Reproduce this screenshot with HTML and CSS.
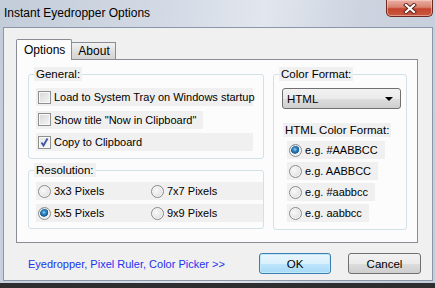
FILE: index.html
```html
<!DOCTYPE html>
<html lang="en">
<head>
    <meta charset="UTF-8">
    <title>Instant Eyedropper Options</title>
    <link rel="stylesheet" href="styles.css">
</head>
<body>
    <div class="window">
        <div class="titlebar">
            <span class="title">Instant Eyedropper Options</span>
            <span class="close">
                <svg width="14" height="11" viewBox="0 0 14 11">
                    <path d="M3 2 L11 9 M11 2 L3 9" stroke="#5a2018" stroke-width="4" stroke-linecap="square"/>
                    <path d="M3 2 L11 9 M11 2 L3 9" stroke="#ffffff" stroke-width="2.2" stroke-linecap="square"/>
                </svg>
            </span>
        </div>

        <div class="client">
            <div class="tabs">
                <div class="tab active">Options</div>
                <div class="tab">About</div>
            </div>

            <div class="panel">
                <div class="left">
                    <fieldset class="group general">
                        <legend>General:</legend>
                        <div class="row wide"><span class="check"></span>Load to System Tray on Windows startup</div>
                        <div class="row"><span class="check"></span>Show title "Now in Clipboard"</div>
                        <div class="row wide"><span class="check checked">
                            <svg width="11" height="11" viewBox="0 0 11 11"><path d="M2.5 5.5 L4.5 8.5 L8.5 1.5" fill="none" stroke="#3d55a0" stroke-width="1.8"/></svg>
                        </span>Copy to Clipboard</div>
                    </fieldset>

                    <fieldset class="group resolution">
                        <legend>Resolution:</legend>
                        <div class="grid">
                            <div class="row"><span class="radio"></span>3x3 Pixels</div>
                            <div class="row"><span class="radio"></span>7x7 Pixels</div>
                            <div class="row"><span class="radio on"></span>5x5 Pixels</div>
                            <div class="row"><span class="radio"></span>9x9 Pixels</div>
                        </div>
                    </fieldset>
                </div>

                <fieldset class="group format">
                    <legend>Color Format:</legend>
                    <div class="select">HTML<span class="arrow"></span></div>
                    <div class="sublabel">HTML Color Format:</div>
                    <div class="row"><span class="radio on"></span>e.g. #AABBCC</div>
                    <div class="row"><span class="radio"></span>e.g. AABBCC</div>
                    <div class="row"><span class="radio"></span>e.g. #aabbcc</div>
                    <div class="row"><span class="radio"></span>e.g. aabbcc</div>
                </fieldset>
            </div>

            <div class="footer">
                <a class="link">Eyedropper, Pixel Ruler, Color Picker &gt;&gt;</a>
                <button class="btn default">OK</button>
                <button class="btn">Cancel</button>
            </div>
        </div>
    </div>
</body>
</html>
```

FILE: styles.css
```css
body { margin: 0; width: 435px; height: 288px; overflow: hidden; background: #2e2e30; font-family: "Liberation Sans", Arial, sans-serif; font-size: 11px; color: #000; }
.window { height: 283px; padding: 0 2px 0 3px; background: linear-gradient(100deg, #c3ccd9 0%, #d3dae5 35%, #e2e6ee 55%, #cdd4e0 75%, #c5cdda 100%); }
.titlebar { height: 27px; display: flex; align-items: flex-start; }
.title { margin: 6px 0 0 1px; font-size: 12px; line-height: 15px; }
.close { margin-left: auto; width: 45px; height: 16px; display: flex; align-items: center; justify-content: center; border: 1px solid #6e2a22; border-top: none; border-radius: 0 0 5px 5px; background: linear-gradient(#eab1a6, #d9826f 45%, #c5452f 55%, #c9573f); box-shadow: inset 0 0 0 1px rgba(255, 220, 210, 0.5); }

.client { height: 254px; padding: 10px 14px 0 12px; background: #f0f0f0; border: 1px solid #8a97a8; box-sizing: border-box; }
.tabs { display: flex; align-items: flex-end; height: 21px; }
.tab { position: relative; height: 16px; line-height: 17px; padding: 0 5px 0 6px; border: 1px solid #898c95; border-bottom: none; background: linear-gradient(#f2f2f2, #e0e0e0 50%, #d4d4d4); font-size: 12px; }
.tab.active { height: 20px; line-height: 20px; padding: 0 6px 0 7px; margin-bottom: -1px; background: #fcfcfc; z-index: 1; border-radius: 2px 2px 0 0; }
.tab + .tab { margin-left: -1px; }

.panel { display: flex; gap: 9px; height: 184px; padding: 7px 10px 0 11px; background: #fcfcfc; border: 1px solid #898c95; box-sizing: border-box; }
.left { display: flex; flex-direction: column; gap: 4px; }

.group { margin: 0; padding: 0; border: 1px solid #d2e0e8; border-radius: 3px; }
.group legend { margin-left: -2px; padding: 0 2px; line-height: 14px; background: #f0f0f0; font-size: 11.5px; }
.general { width: 236px; padding: 7px 0 7px 7px; display: flex; flex-direction: column; gap: 4.5px; box-sizing: border-box; }
.resolution { width: 236px; padding: 5px 0 6px 7px; box-sizing: border-box; }
.grid { display: grid; grid-template-columns: 113px auto; row-gap: 4px; }
.format { width: 137px; height: 163px; padding: 7px 0 0 8px; box-sizing: border-box; }
.format legend { margin-left: -3px; }

.row { display: inline-flex; align-items: center; height: 18px; padding: 0 7px 0 2px; background: #f0f0f0; align-self: flex-start; white-space: nowrap; font-size: 11px; }
.row.wide { width: 217px; box-sizing: border-box; }
.check { flex: none; width: 11px; height: 11px; margin-right: 3px; border: 1px solid #8e8f8f; background: linear-gradient(135deg, #d8d8d8, #f4f4f4); box-shadow: inset 0 0 0 1px #f8f8f8; display: flex; align-items: center; justify-content: center; }
.check.checked { background: linear-gradient(135deg, #e4e4e4, #f8f8f8); }
.radio { flex: none; width: 11px; height: 11px; margin-right: 3px; border: 1px solid #8a8a8a; border-radius: 50%; background: radial-gradient(circle at 40% 40%, #fafafa, #d4d4d4); box-shadow: inset 0 0 0 1px #f6f6f6; }
.radio.on { background: radial-gradient(circle at 45% 40%, #9ad6f4 0, #2d84c2 2px, #1b5a94 4px, #f2f2f2 4.6px, #d0d0d0); }

.select { position: relative; width: 119px; height: 21px; margin-bottom: 14px; padding-left: 4px; line-height: 20px; border: 1px solid #707070; border-radius: 3px; background: linear-gradient(#f2f2f2, #ebebeb 50%, #dddddd 51%, #cfcfcf); box-sizing: border-box; font-size: 11.5px; }
.arrow { position: absolute; right: 7px; top: 8px; border-left: 4px solid transparent; border-right: 4px solid transparent; border-top: 4px solid #000; }
.sublabel { display: inline-block; margin-left: 1px; padding: 0 2px; line-height: 14px; background: #f0f0f0; font-size: 11.5px; }
.format .row { display: flex; width: fit-content; margin: 3px 0 0 5px; }
.format .sublabel + .row { margin-top: 4px; }

.footer { display: flex; align-items: center; padding: 10px 0 0 12px; margin-right: -3px; }
.link { color: #2233ee; font-size: 11px; }
.btn { height: 21px; font: inherit; font-size: 11.5px; border: 1px solid #707070; border-radius: 3px; background: linear-gradient(#f2f2f2, #ebebeb 50%, #dddddd 51%, #cfcfcf); padding: 0; }
.btn.default { width: 72px; margin-left: auto; border-color: #3c7fb1; background: linear-gradient(#eaf6fd, #d9f0fc 50%, #bee6fd 51%, #a7d9f5); box-shadow: inset 0 0 0 1px #c0e8f8; }
.btn + .btn { width: 73px; margin-left: 17px; }
```
